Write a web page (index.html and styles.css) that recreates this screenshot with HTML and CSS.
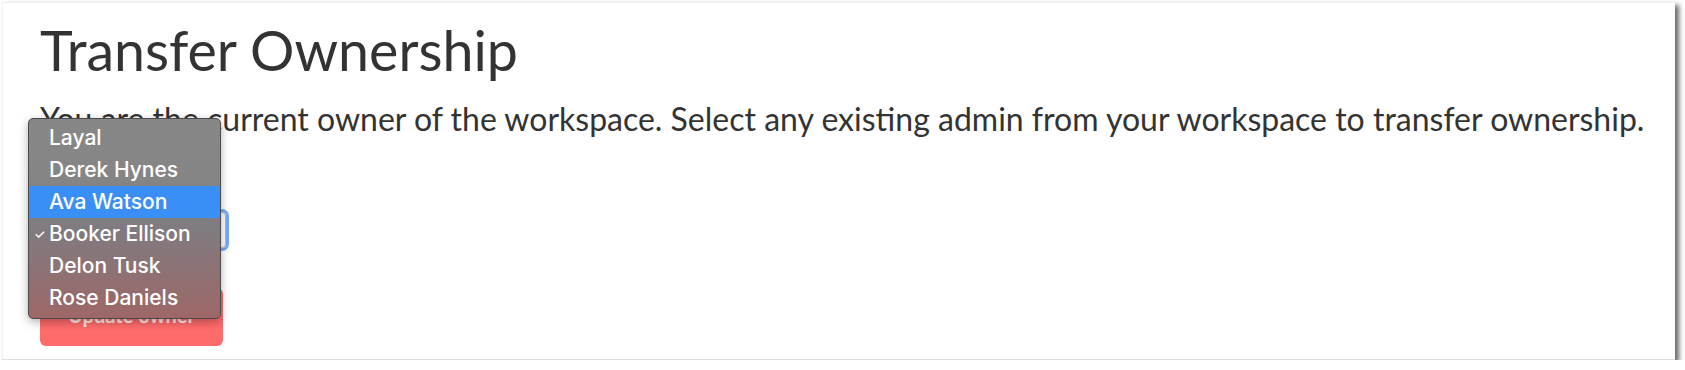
FILE: index.html
```html
<!DOCTYPE html>
<html lang="en">

<head>
    <meta charset="UTF-8">
    <meta name="viewport" content="width=device-width, initial-scale=1.0">
    <title>Transfer Ownership</title>

    <link rel="stylesheet" href="styles.css">
</head>

<body>
    <div class="panel">
        <h1>Transfer Ownership</h1>
        <p>You are the current owner of the workspace. Select any existing admin from your workspace to transfer ownership.</p>

        <div class="owner-select">Booker Ellison</div>
        <button class="update-btn" type="button">Update owner</button>

        <!-- open native-style popup menu -->
        <ul class="select-menu">
            <li>Layal</li>
            <li>Derek Hynes</li>
            <li class="hover">Ava Watson</li>
            <li class="checked">Booker Ellison</li>
            <li>Delon Tusk</li>
            <li>Rose Daniels</li>
        </ul>
    </div>
</body>

</html>
```

FILE: styles.css
```css
body {
    font-family: Lato, "Open Sans", sans-serif;
    background-color: #ffffff;
    margin: 0;
    padding: 2px 0 0 2px;
    color: #333333;
}

.panel {
    position: relative;
    box-sizing: border-box;
    width: 1673px;
    height: 358px;
    padding: 0 0 0 37px;
    background-color: #ffffff;
    border-top: 1px solid #eeeeee;
    border-left: 1px solid #f2f2f2;
    border-bottom: 1px solid #dddddd;
    box-shadow: 4px 3px 5px rgba(0, 0, 0, 0.6);
}

h1 {
    margin: 13px 0 0 0;
    font-size: 55.5px;
    font-weight: 400;
    line-height: 68px;
    color: #333333;
}

p {
    margin: 16px 0 0 0;
    font-size: 32px;
    line-height: 38px;
}

.owner-select {
    box-sizing: border-box;
    width: 186px;
    height: 36px;
    margin-top: 74px;
    padding: 5px 12px;
    font-size: 19px;
    border: 1px solid #b5b5b5;
    border-radius: 4px;
    box-shadow: 0 0 0 3px rgba(70, 140, 250, 0.75);
}

.update-btn {
    display: block;
    width: 183px;
    height: 58px;
    margin-top: 40px;
    padding-bottom: 6px;
    border: none;
    border-radius: 6px;
    background-color: #ff6b6b;
    color: #ffe9e9;
    font-family: Lato, sans-serif;
    font-size: 20px;
    font-weight: 700;
}

.select-menu {
    position: absolute;
    left: 25px;
    top: 115px;
    box-sizing: border-box;
    width: 193px;
    margin: 0;
    padding: 3px 0 4px 0;
    list-style: none;
    border: 1px solid #4a4a4a;
    border-radius: 5px;
    background: linear-gradient(to bottom, #878787 0%, #858585 30%, #7f7b80 55%, #9e6767 100%);
    box-shadow: 0 3px 10px rgba(0, 0, 0, 0.3);
    font-family: Inter, Roboto, sans-serif;
    font-size: 21px;
    font-weight: 500;
    color: #ffffff;
}

.select-menu li {
    position: relative;
    height: 32px;
    line-height: 32px;
    padding-left: 20px;
}

.select-menu li.hover {
    background-color: #3a8ff6;
}

.select-menu li.checked::before {
    content: "\2713";
    position: absolute;
    left: 5px;
    font-size: 13px;
}
```
